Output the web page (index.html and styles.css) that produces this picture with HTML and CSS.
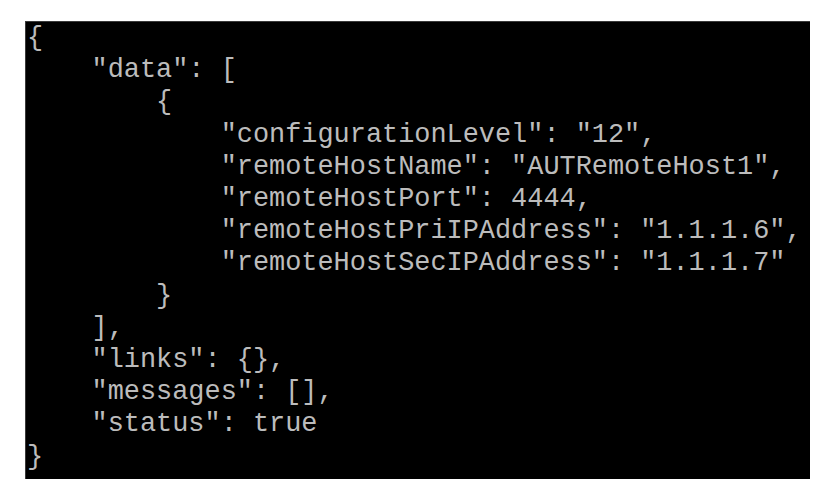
FILE: index.html
```html
<!DOCTYPE html>
<html>
<head>
<meta charset="utf-8">
<link rel="stylesheet" href="styles.css">
</head>
<body>
<div class="terminal"><pre class="code">{
    "data": [
        {
            "configurationLevel": "12",
            "remoteHostName": "AUTRemoteHost1",
            "remoteHostPort": 4444,
            "remoteHostPriIPAddress": "1.1.1.6",
            "remoteHostSecIPAddress": "1.1.1.7"
        }
    ],
    "links": {},
    "messages": [],
    "status": true
}</pre></div>
</body>
</html>
```
FILE: styles.css
```css
html, body {
  margin: 0;
  padding: 0;
  background: #ffffff;
}
.terminal {
  margin: 21px 0 0 25px;
  width: 785px;
  height: 458px;
  box-sizing: border-box;
  background: #000000;
  border-top: 1px solid #3a3a3a;
  border-left: 1px solid #3a3a3a;
  padding: 0 0 0 1px;
  overflow: hidden;
}
.code {
  margin: 0;
  font-family: "Courier New", "Liberation Mono", monospace;
  font-size: 26.9px;
  line-height: 32.2px;
  color: #bcbcbc;
  white-space: pre;
}
```
